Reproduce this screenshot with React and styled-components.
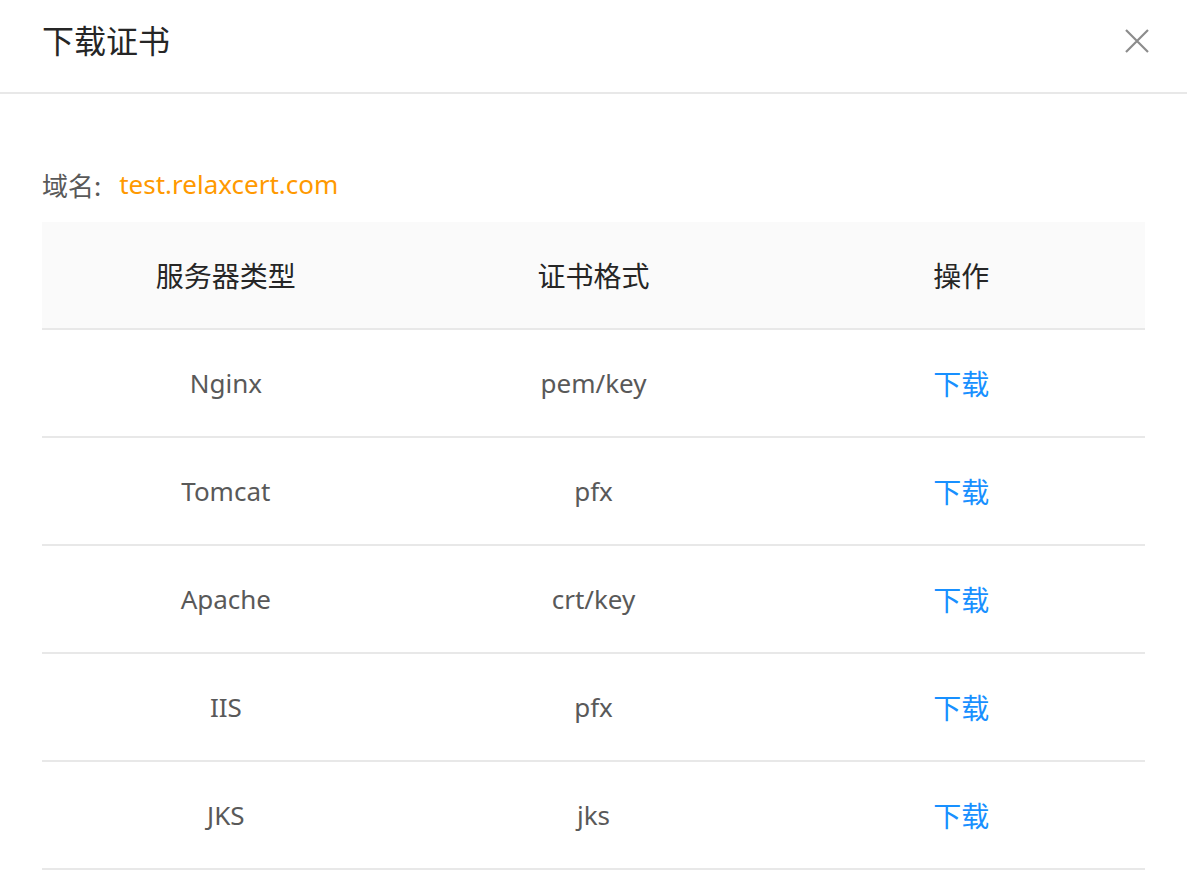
import React from "react";
import styled, { createGlobalStyle } from "styled-components";

const GlobalStyle = createGlobalStyle`
  html, body {
    margin: 0;
    padding: 0;
    background: #ffffff;
  }
  body {
    font-family: "Noto Sans", "Noto Sans CJK SC", sans-serif;
  }
`;

const Modal = styled.div`
  width: 1187px;
  min-height: 889px;
  background: #ffffff;
`;

const Header = styled.div`
  display: flex;
  align-items: center;
  justify-content: space-between;
  height: 92px;
  padding: 0 36px 0 42px;
  border-bottom: 2px solid #e8e8e8;
  box-sizing: content-box;
`;

const Title = styled.div`
  font-family: "Noto Sans CJK SC", sans-serif;
  font-size: 32px;
  color: #262626;
  margin-top: -14px;
`;

const CloseButton = styled.button`
  display: flex;
  align-items: center;
  justify-content: center;
  width: 28px;
  height: 28px;
  padding: 0;
  border: none;
  background: transparent;
  cursor: pointer;
  margin-top: -10px;
`;

const Body = styled.div`
  padding: 70px 42px 0;
`;

const DomainLine = styled.div`
  display: flex;
  align-items: center;
  height: 40px;
  font-size: 26px;
  color: #595959;
`;

const Label = styled.span`
  font-family: "Noto Sans CJK SC", sans-serif;
  margin-right: 18px;
`;

const Domain = styled.span`
  color: #ff9900;
`;

const Table = styled.div`
  margin-top: 18px;
  width: 1103px;
`;

const Row = styled.div`
  display: grid;
  grid-template-columns: repeat(3, 1fr);
  height: 106px;
  border-bottom: 2px solid #e8e8e8;
  background: ${({ head }) => (head ? "#fafafa" : "#ffffff")};
`;

const Cell = styled.div`
  display: flex;
  align-items: center;
  justify-content: center;
  font-size: ${({ head }) => (head ? "28px" : "26px")};
  color: ${({ head }) => (head ? "#262626" : "#595959")};
  font-family: ${({ head }) =>
    head ? `"Noto Sans CJK SC", sans-serif` : `"Noto Sans", "Noto Sans CJK SC", sans-serif`};
`;

const Link = styled.a`
  font-family: "Noto Sans CJK SC", sans-serif;
  font-size: 28px;
  color: #1890ff;
  text-decoration: none;
  cursor: pointer;
`;

const rows = [
  { server: "Nginx", format: "pem/key" },
  { server: "Tomcat", format: "pfx" },
  { server: "Apache", format: "crt/key" },
  { server: "IIS", format: "pfx" },
  { server: "JKS", format: "jks" },
];

const CloseIcon = () => (
  <svg width="24" height="24" viewBox="0 0 24 24">
    <path
      d="M1 1 L23 23 M23 1 L1 23"
      stroke="#8c8c8c"
      strokeWidth="2.2"
      fill="none"
    />
  </svg>
);

const App = () => {
  return (
    <Modal>
      <GlobalStyle />
      <Header>
        <Title>下载证书</Title>
        <CloseButton aria-label="close">
          <CloseIcon />
        </CloseButton>
      </Header>
      <Body>
        <DomainLine>
          <Label>域名:</Label>
          <Domain>test.relaxcert.com</Domain>
        </DomainLine>
        <Table>
          <Row head>
            <Cell head>服务器类型</Cell>
            <Cell head>证书格式</Cell>
            <Cell head>操作</Cell>
          </Row>
          {rows.map((item, index) => (
            <Row key={index}>
              <Cell>{item.server}</Cell>
              <Cell>{item.format}</Cell>
              <Cell>
                <Link>下载</Link>
              </Cell>
            </Row>
          ))}
        </Table>
      </Body>
    </Modal>
  );
};

export default App;
